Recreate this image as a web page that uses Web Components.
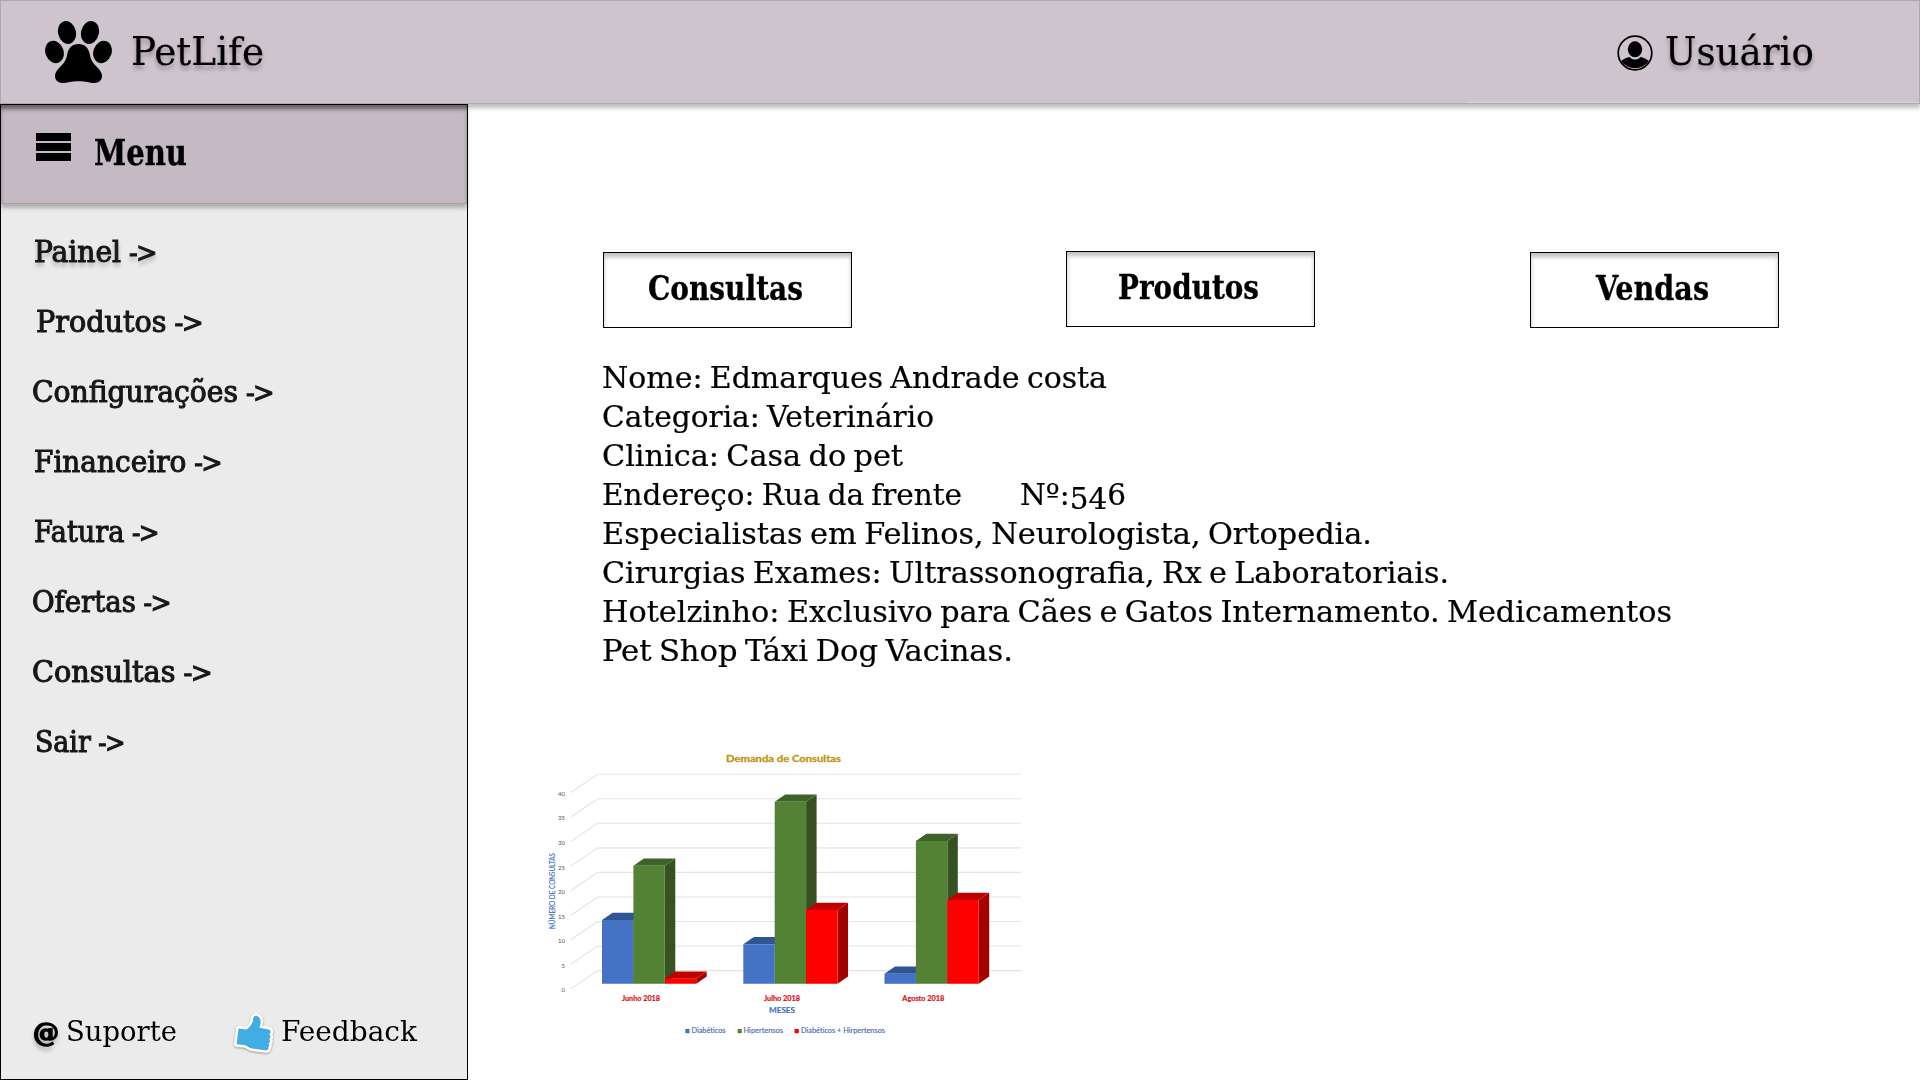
<!DOCTYPE html>
<html lang="pt-BR">
<head>
<meta charset="utf-8">
<title>PetLife</title>
<style>
  html, body { margin: 0; height: 100%; }
  body { width: 1920px; height: 1080px; overflow: hidden; background: #fff; color: #000;
    font-family: "DejaVu Serif Condensed", "DejaVu Serif", serif; }
</style>
</head>
<body>
<pet-app></pet-app>
<script>
const define = (name, html, setup) => customElements.define(name, class extends HTMLElement {
  connectedCallback() {
    if (this.shadowRoot) return;
    this.attachShadow({ mode: 'open' }).innerHTML = html.trim();
    if (setup) setup(this, this.shadowRoot);
  }
});

/* One line of text stretched or narrowed to the width given in "w". */
define('fit-text', `
<style>
  :host { display: block; flex: none; }
  span { display: block; width: max-content; white-space: pre; transform-origin: 0 50%; }
</style><span><slot></slot></span>`, (el, root) => {
  const span = root.querySelector('span');
  const w = +el.getAttribute('w');
  el.style.width = w + 'px';
  span.style.transform = `scaleX(${w / (span.getBoundingClientRect().width || w)})`;
});

define('paw-icon', `
<style>:host { display: block; width: 67px; height: 62px; } svg { display: block; }</style>
<svg width="67" height="62" viewBox="0 0 67 62">
  <ellipse cx="22" cy="11.4" rx="8.9" ry="11.6" transform="rotate(-14 22 11.4)"/>
  <ellipse cx="45" cy="11.4" rx="8.9" ry="11.6" transform="rotate(14 45 11.4)"/>
  <ellipse cx="9.5" cy="31" rx="9.1" ry="11.4" transform="rotate(-20 9.5 31)"/>
  <ellipse cx="57.5" cy="31" rx="9.1" ry="11.4" transform="rotate(20 57.5 31)"/>
  <path d="M33.500 23C40 23 43.500 27 44.700 33C46 40 48.500 42.500 52 46C55.500 49.500 57 52 57 55C57 59 54 62 49.500 62C45 62 41 60.300 33.500 60.300C26 60.300 22 62 17.500 62C13 62 10 59 10 55C10 52 11.500 49.500 15 46C18.500 42.500 21 40 22.300 33C23.500 27 27 23 33.500 23Z"/>
</svg>`);

define('user-icon', `
<style>:host { display: block; width: 36px; height: 36px; } svg { display: block; }</style>
<svg width="36" height="36" viewBox="0 0 36 36">
  <circle cx="18" cy="18" r="16.800" fill="none" stroke="#000" stroke-width="1.700"/>
  <ellipse cx="18" cy="14.300" rx="7.200" ry="8"/>
  <path d="M4 26C7 23.500 10 22.800 12.500 22C14.500 24 16 24.500 18 24.500C20 24.500 21.500 24 23.500 22C26 22.800 29 23.500 32 26A17.200 17.200 0 0 1 4 26Z"/>
</svg>`);

define('menu-icon', `
<style>
  :host { display: flex; flex-direction: column; gap: 2px; width: 35px; }
  i { height: 8px; background: #000; }
</style><i></i><i></i><i></i>`);

define('thumb-icon', `
<style>:host { display: block; width: 42px; height: 44px; }
svg { display: block; overflow: visible; filter: drop-shadow(0 1px 1px rgba(0,0,0,.35)); }</style>
<svg width="42" height="44" viewBox="0 0 42 44">
  <path fill="#42ade2" stroke="#fff" stroke-width="5" stroke-linejoin="round" paint-order="stroke"
   d="M5.500 16.600L13.500 17.500C17 15 19.800 11.500 20 7.500C20.200 4 22.500 3.300 24.500 4.200C29 6.300 27.800 11.500 26.500 15.800L35 17.300C38.500 18 38 21.500 36 22.200C38.500 23.500 37.500 26.500 36 26.800C38 28 37 31 35.300 31.300C37 32.500 36.200 34.500 35.300 35C36 37 34.500 38.500 32.500 38.300L19 36.400C14.500 35.800 14 32.700 10 33L3.600 32.300Z"/>
</svg>`);

define('app-header', `
<style>
  :host { display: flex; align-items: center; justify-content: space-between; box-sizing: border-box;
    height: 104px; padding: 0 105px 0 44px; border: 1px solid #b3a6b2;
    background: linear-gradient(#dcd6dc, #dcd6dc) 100% 100% / 451px 1px no-repeat #cec4ce;
    box-shadow: 0 4px 4px rgba(0,0,0,.25); font-size: 38.400px; line-height: 102px; }
  .brand, .user { display: flex; align-items: center; }
  .brand { gap: 19px; } .user { gap: 12px; }
  fit-text { text-shadow: 0 4px 4px rgba(0,0,0,.3); -webkit-text-stroke: .2px #000; }
  user-icon { margin-top: 1px; }
</style>
<div class="brand"><paw-icon></paw-icon><fit-text w="133">PetLife</fit-text></div>
<div class="user"><user-icon></user-icon><fit-text w="149">Usuário</fit-text></div>`);

define('side-bar', `
<style>
  :host { display: flex; flex-direction: column; box-sizing: border-box; width: 468px; height: 976px;
    background: #ebebeb; border: 1px solid #000; }
  .head { display: flex; align-items: center; gap: 23px; box-sizing: border-box; height: 99px; padding-left: 35px;
    background: #c5bac4; border-bottom: 1px solid #ab9eaa; font-size: 34.500px; line-height: 96px; font-weight: bold;
    box-shadow: inset 0 5px 4px -1px rgba(0,0,0,.5), 0 4px 4px rgba(0,0,0,.25); }
  .head fit-text { -webkit-text-stroke: .4px #000; margin-bottom: 3px; }
  menu-icon { margin-bottom: 14px; }
  nav { flex: 1; padding-top: 13px; }
  nav fit-text { height: 70px; line-height: 70px; font-size: 29.600px; word-spacing: -1px; color: #171717;
    -webkit-text-stroke: 1px #171717; }
  nav b { font-weight: inherit; font-size: 27px; letter-spacing: -1.500px; }
  nav fit-text:first-child { text-shadow: 0 4px 4px rgba(0,0,0,.3); }
  .foot { display: flex; align-items: center; height: 94px; padding-left: 32px; font-size: 28.500px; line-height: 94px; }
  .at { font-weight: bold; font-size: 26px; -webkit-text-stroke: 1.500px #000; text-shadow: 0 4px 4px rgba(0,0,0,.4); }
  .sup { margin-left: 7px; } thumb-icon { margin: 4px 6px 0 56px; }
</style>
<div class="head"><menu-icon></menu-icon><fit-text w="93">Menu</fit-text></div>
<nav>
  <fit-text w="122" style="margin-left:33px">Painel <b>-&gt;</b></fit-text>
  <fit-text w="166" style="margin-left:35px">Produtos <b>-&gt;</b></fit-text>
  <fit-text w="241" style="margin-left:31px">Configurações <b>-&gt;</b></fit-text>
  <fit-text w="187" style="margin-left:33px">Financeiro <b>-&gt;</b></fit-text>
  <fit-text w="124" style="margin-left:33px">Fatura <b>-&gt;</b></fit-text>
  <fit-text w="138" style="margin-left:31px">Ofertas <b>-&gt;</b></fit-text>
  <fit-text w="179" style="margin-left:31px">Consultas <b>-&gt;</b></fit-text>
  <fit-text w="89" style="margin-left:34px">Sair <b>-&gt;</b></fit-text>
</nav>
<div class="foot"><fit-text class="at" w="26">@</fit-text><fit-text class="sup" w="111">Suporte</fit-text>
<thumb-icon></thumb-icon><fit-text w="136">Feedback</fit-text></div>`);

define('tab-button', `
<style>
  :host { display: flex; justify-content: center; box-sizing: border-box; width: 249px; height: 76px;
    border: 1px solid #000; background: #fff; box-shadow: inset 0 4px 4px rgba(0,0,0,.25);
    font-size: 33px; font-weight: bold; line-height: 71px; -webkit-text-stroke: .3px #000; }
  ::slotted(*) { margin-right: 4px; }
</style><slot></slot>`);

define('clinic-info', `
<style>
  :host { display: flex; flex-direction: column; margin-left: -1px; font-size: 30px; line-height: 39px;
    word-spacing: -2px; -webkit-text-stroke: .2px #000; }
  .row { display: flex; gap: 58px; }
  i { font-style: normal; position: relative; top: 4px; }
</style>
<fit-text w="505">Nome: Edmarques Andrade costa</fit-text>
<fit-text w="332">Categoria: Veterinário</fit-text>
<fit-text w="301">Clinica: Casa do pet</fit-text>
<div class="row"><fit-text w="360">Endereço: Rua da frente</fit-text><fit-text w="106">Nº:<i>54</i>6</fit-text></div>
<fit-text w="770">Especialistas em Felinos, Neurologista, Ortopedia.</fit-text>
<fit-text w="847">Cirurgias Exames: Ultrassonografia, Rx e Laboratoriais.</fit-text>
<fit-text w="1070">Hotelzinho: Exclusivo para Cães e Gatos Internamento. Medicamentos</fit-text>
<fit-text w="411">Pet Shop Táxi Dog Vacinas.</fit-text>`);

define('demand-chart', `
<style>
  :host { display: block; width: 500px; height: 310px; }
  svg { display: block; font-family: Lato, sans-serif; }
</style><svg width="500" height="310" viewBox="530 740 500 310"></svg>`, (el, root) => {
  let s = '';
  for (let i = 0; i < 9; i++) {
    const back = 774.2 + i * 24.55, front = 792.5 + i * 24.55;
    s += `<path d="M570.700 ${front}L597.700 ${back}H1021" fill="none" stroke="#e3e3e3" stroke-width="1.100"/>`;
    s += `<text x="565" y="${front + 3.4}" text-anchor="end" font-size="6" fill="#555">${40 - i * 5}</text>`;
  }
  const palette = [['#4472c4', '#2f5592', '#2a4a80'], ['#548235', '#3f6228', '#365223'], ['#ff0000', '#c00000', '#a40000']];
  const base = 983.8, dx = 10.5, dy = 7.3, w = 31.4;
  [[602, 920, 865.7, 978.7], [743.3, 944.3, 801.8, 910], [884.5, 973.7, 841, 900]].forEach(([x0, ...tops]) => {
    tops.forEach((t, k) => {
      const x = x0 + k * w, r = x + w, [face, top, side] = palette[k];
      s += `<path fill="${side}" d="M${r} ${t}l${dx} ${-dy}V${base - dy}L${r} ${base}Z"/>
        <path fill="${top}" d="M${x} ${t}l${dx} ${-dy}h${w}L${r} ${t}Z"/>
        <path fill="${face}" d="M${x} ${t}H${r}V${base}H${x}Z"/>`;
    });
  });
  const t = (x, y, len, size, fill, str, bold, extra = '') =>
    s += `<text x="${x}" y="${y}" textLength="${len}" lengthAdjust="spacingAndGlyphs" font-size="${size}" fill="${fill}" font-weight="${bold ? 700 : 400}" ${extra}>${str}</text>`;
  t(726, 762, 115, 9.8, '#bf9310', 'Demanda de Consultas', 1, 'stroke="#bf9310" stroke-width=".3"');
  t(622, 1001.2, 38, 7.4, '#dc1418', 'Junho 2018', 1, 'stroke="#dc1418" stroke-width=".2"');
  t(764, 1001.2, 36, 7.4, '#dc1418', 'Julho 2018', 1, 'stroke="#dc1418" stroke-width=".2"');
  t(902.3, 1001.2, 42, 7.4, '#dc1418', 'Agosto 2018', 1, 'stroke="#dc1418" stroke-width=".2"');
  t(769, 1013.300, 26, 8.4, '#4472c4', 'MESES', 1, 'stroke="#4472c4" stroke-width=".2"');
  t(0, 0, 76, 8, '#4472c4', 'NÚMERO DE CONSULTAS', 0, 'transform="translate(555 929) rotate(-90)" stroke="#4472c4" stroke-width=".15"');
  [[685.3, '#4472c4', 691.5, 34, 'Diabéticos'], [737.6, '#548235', 743.5, 39.5, 'Hipertensos'], [794.6, '#ff0000', 801, 84, 'Diabéticos + Hirpertensos']]
    .forEach(([x, c, tx, len, str]) => {
      s += `<rect x="${x}" y="1029" width="4.200" height="4.200" fill="${c}"/>`;
      t(tx, 1033.2, len, 7.3, '#4a6cae', str, 0, 'stroke="#4a6cae" stroke-width=".15"');
    });
  root.querySelector('svg').innerHTML = s;
});

define('main-view', `
<style>
  :host { display: block; box-sizing: border-box; padding: 147px 141px 0 135px; }
  .tabs { display: flex; justify-content: space-between; align-items: flex-start; height: 107px; }
  tab-button.lead { margin-top: 1px; }
  demand-chart { margin: 70px 0 0 -73px; }
</style>
<div class="tabs">
  <tab-button class="lead"><fit-text w="155">Consultas</fit-text></tab-button>
  <tab-button style="margin-left:-1px"><fit-text w="141">Produtos</fit-text></tab-button>
  <tab-button class="lead"><fit-text w="113">Vendas</fit-text></tab-button>
</div>
<clinic-info></clinic-info>
<demand-chart></demand-chart>`);

define('pet-app', `
<style>
  :host { display: grid; grid-template: 104px 976px / 468px 1fr; width: 1920px; height: 1080px; }
  app-header { grid-column: 1 / 3; }
</style>
<app-header></app-header><side-bar></side-bar><main-view></main-view>`);
</script>
</body>
</html>
